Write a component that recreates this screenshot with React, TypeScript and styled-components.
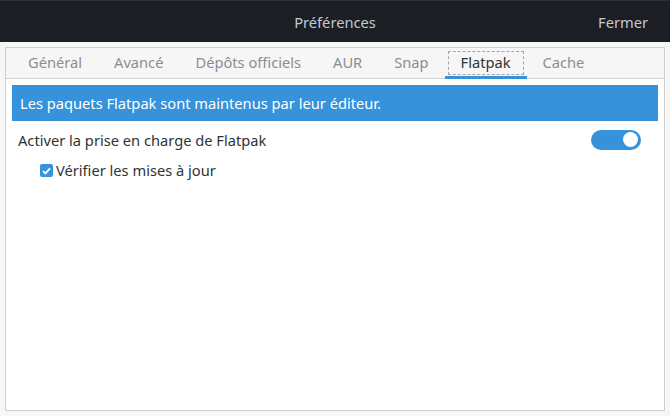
import React, { useState } from 'react';
import styled, { createGlobalStyle } from 'styled-components';

const GlobalStyle = createGlobalStyle`
    html, body {
        margin: 0;
        padding: 0;
        background: #f6f6f6;
        font-family: "Noto Sans", "DejaVu Sans", sans-serif;
        font-size: 14.67px;
    }
`

const Window = styled.div`
    width: 670px;
    height: 416px;
    display: flex;
    flex-direction: column;
    background: #f6f6f6;
`

const HeaderBar = styled.div`
    height: 42px;
    box-sizing: border-box;
    border-top: 1px solid #2c2f35;
    background: #1b1e25;
    display: grid;
    grid-template-columns: 1fr auto 1fr;
    align-items: center;
    color: #c6c9cd;
`

const Title = styled.div`
    grid-column: 2;
`

const CloseButton = styled.div`
    grid-column: 3;
    justify-self: end;
    margin-right: 22px;
`

const Notebook = styled.div`
    flex: 1;
    margin: 5px;
    border: 1px solid #cfcfcf;
    display: flex;
    flex-direction: column;
    min-height: 0;
`

const TabBar = styled.div`
    height: 30px;
    display: flex;
    padding-left: 6px;
    border-bottom: 1px solid #d3d3d3;
    background: #f6f6f6;
`

const Tab = styled.div<{ $active?: boolean }>`
    height: 31px;
    box-sizing: border-box;
    margin-bottom: -1px;
    padding: 3px 3px 0;
    border-bottom: 3px solid ${p => (p.$active ? '#3592db' : 'transparent')};
    color: ${p => (p.$active ? '#2e3436' : '#8b8e8f')};
`

const TabLabel = styled.span<{ $focus?: boolean }>`
    display: flex;
    align-items: center;
    height: 24px;
    box-sizing: border-box;
    padding: 0 12px 2px;
    border: 1px dashed ${p => (p.$focus ? '#a6a6a6' : 'transparent')};
`

const Page = styled.div`
    flex: 1;
    background: #ffffff;
    padding: 6px;
    display: flex;
    flex-direction: column;
`

const Banner = styled.div`
    height: 36px;
    display: flex;
    align-items: center;
    padding: 0 8px;
    background: #3592db;
    color: #ffffff;
`

const Row = styled.div<{ $indent?: number; $height: number }>`
    height: ${p => p.$height}px;
    display: flex;
    align-items: center;
    justify-content: space-between;
    padding: 0 17px 0 ${p => 6 + (p.$indent ?? 0)}px;
    color: #2e3436;
`

const CheckLabel = styled.label`
    display: flex;
    align-items: center;
    gap: 3px;
`

const CheckBox = styled.span`
    width: 13px;
    height: 13px;
    margin-top: 1px;
    border-radius: 2px;
    background: #3592db;
    display: flex;
    align-items: center;
    justify-content: center;
`

const Switch = styled.button<{ $on: boolean }>`
    width: 50px;
    height: 20px;
    border: none;
    border-radius: 10px;
    padding: 0 3px;
    background: ${p => (p.$on ? '#3592db' : '#c8c8c8')};
    display: flex;
    align-items: center;
    justify-content: ${p => (p.$on ? 'flex-end' : 'flex-start')};
    cursor: pointer;
`

const Knob = styled.span`
    width: 15px;
    height: 15px;
    border-radius: 50%;
    background: #ffffff;
`

const tabs = ['Général', 'Avancé', 'Dépôts officiels', 'AUR', 'Snap', 'Flatpak', 'Cache'];

const App = () => {
    const [enabled, setEnabled] = useState(true);

    return (
        <Window>
            <GlobalStyle />
            <HeaderBar>
                <Title>Préférences</Title>
                <CloseButton>Fermer</CloseButton>
            </HeaderBar>
            <Notebook>
                <TabBar>
                    {tabs.map((tab) => (
                        <Tab key={tab} $active={tab === 'Flatpak'}>
                            <TabLabel $focus={tab === 'Flatpak'}>{tab}</TabLabel>
                        </Tab>
                    ))}
                </TabBar>
                <Page>
                    <Banner>Les paquets Flatpak sont maintenus par leur éditeur.</Banner>
                    <Row $height={37}>
                        <span>Activer la prise en charge de Flatpak</span>
                        <Switch $on={enabled} onClick={() => setEnabled(!enabled)}>
                            <Knob />
                        </Switch>
                    </Row>
                    <Row $height={24} $indent={22}>
                        <CheckLabel>
                            <CheckBox>
                                <svg width="9" height="8" viewBox="0 0 9 8">
                                    <path d="M1 4.2 L3.4 6.4 L8 1.4" fill="none" stroke="#fff" strokeWidth="1.8" />
                                </svg>
                            </CheckBox>
                            Vérifier les mises à jour
                        </CheckLabel>
                    </Row>
                </Page>
            </Notebook>
        </Window>
    );
};

export default App;
